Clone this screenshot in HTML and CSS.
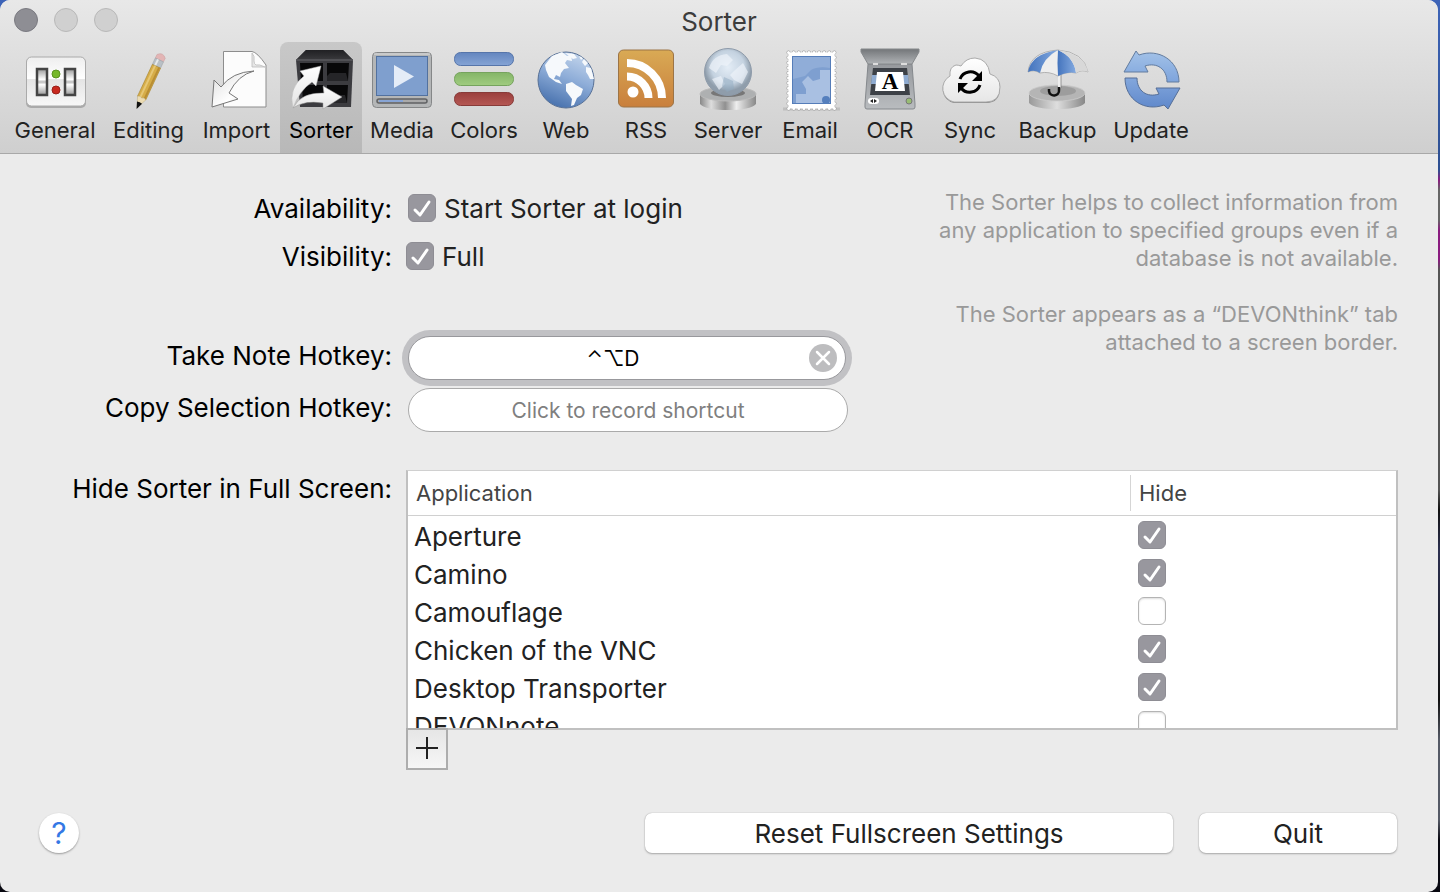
FILE: index.html
```html
<!DOCTYPE html>
<html lang="en">
<head>
<meta charset="UTF-8">
<meta name="viewport" content="width=device-width, initial-scale=1.0">
<title>Sorter</title>
<link rel="stylesheet" href="styles.css">
</head>
<body>
<div class="window">
    <header class="header">
        <div class="titlebar">
            <div class="lights">
                <button class="light light-close" aria-label="Close"></button>
                <button class="light" aria-label="Minimize"></button>
                <button class="light" aria-label="Zoom"></button>
            </div>
            <h1 class="title">Sorter</h1>
        </div>
        <nav class="toolbar">
            <button class="tool">
                <svg class="icon" viewBox="0 0 64 64">
                    <defs>
                        <linearGradient id="panel" x2="0" y2="1"><stop offset="0" stop-color="#eee"/><stop offset=".45" stop-color="#fff"/><stop offset=".46" stop-color="#e4e4e4"/><stop offset="1" stop-color="#f8f8f8"/></linearGradient>
                        <linearGradient id="slot" x2="0" y2="1"><stop offset="0" stop-color="#999"/><stop offset=".4" stop-color="#fff"/><stop offset=".5" stop-color="#bbb"/><stop offset=".6" stop-color="#fff"/><stop offset="1" stop-color="#999"/></linearGradient>
                    </defs>
                    <rect x="3" y="10" width="60" height="50" rx="5" fill="#aaa"/>
                    <rect x="3.500" y="9" width="59" height="49" rx="5" fill="url(#panel)" stroke="#aaa"/>
                    <rect x="14" y="21" width="10" height="26" fill="url(#slot)" stroke="#444" stroke-width="2.500"/>
                    <rect x="42" y="21" width="10" height="26" fill="url(#slot)" stroke="#444" stroke-width="2.500"/>
                    <circle cx="33" cy="26" r="4" fill="#76b82a" stroke="#5b9320"/>
                    <circle cx="33" cy="42" r="4" fill="#c8281e" stroke="#98201a"/>
                </svg>
                <span>General</span>
            </button>
            <button class="tool">
                <svg class="icon" viewBox="0 0 64 64">
                    <g transform="translate(20 60) rotate(25)">
                        <path d="M-4.500-53V-57Q0-62 4.500-57V-53Z" fill="#e3b5b5" stroke="#c9a0a0" stroke-width=".5"/>
                        <path d="M-4.500-53H4.500V-46H-4.500Z" fill="#b9c0c6" stroke="#9aa0a5" stroke-width=".5"/>
                        <path d="M-1.500-53V-46" stroke="#e6eaed" stroke-width="2"/>
                        <path d="M-4.500-46H4.500V-11H-4.500Z" fill="#d6ad48" stroke="#a8852e" stroke-width=".6"/>
                        <path d="M-1.500-46V-11" stroke="#e6c775" stroke-width="2"/>
                        <path d="M3-46V-11" stroke="#b98e33" stroke-width="2"/>
                        <path d="M-4.500-11L0 0L4.500-11Q2-13 0-11Q-2-13-4.500-11Z" fill="#ecdcb4" stroke="#b5a578" stroke-width=".4"/>
                        <path d="M-2.800-6L0 1L2.800-6Q0-7-2.800-6Z" fill="#111"/>
                    </g>
                </svg>
                <span>Editing</span>
            </button>
            <button class="tool">
                <svg class="icon" viewBox="0 0 64 64">
                    <defs><linearGradient id="arrow" x2="1" y2="1"><stop offset="0" stop-color="#ddd"/><stop offset=".6" stop-color="#fff"/><stop offset="1" stop-color="#ccc"/></linearGradient></defs>
                    <path d="M18.500 3.500H47Q52 4 61 17V59H18.500Z" fill="#fcfcfc" stroke="#8d8d8d"/>
                    <path d="M47 5V19H60Q54 16 51 17Q49 16 49 13Q50 8 47 5Z" fill="#e6e6e6" stroke="#bbb" stroke-width=".8"/>
                    <path d="M7 59L9 32L16 39Q27 24 49 23Q33 27 24 45L33 51Z" fill="url(#arrow)" stroke="#777"/>
                </svg>
                <span>Import</span>
            </button>
            <button class="tool tool-active">
                <svg class="icon" viewBox="0 0 64 64">
                    <defs>
                        <linearGradient id="boxtop" x2="0" y2="1"><stop offset="0" stop-color="#202023"/><stop offset="1" stop-color="#3a3a3d"/></linearGradient>
                        <linearGradient id="fly" x2="0" y2="1"><stop offset="0" stop-color="#fff"/><stop offset="1" stop-color="#e4e4e4"/></linearGradient>
                    </defs>
                    <path d="M17 2H54L64 12L62 59H11L7 12Z" fill="#3c3c40"/>
                    <path d="M17 2H54L64 12H7Z" fill="url(#boxtop)"/>
                    <path d="M7 12H64" stroke="#58585c" stroke-width="1.500"/>
                    <path d="M11 15H34V33H12ZM38 15H60L59 33H38ZM13 37H34V55H14ZM38 37H59L58 55H38Z" fill="#080809"/>
                    <path d="M38 33V28L41 25H57L59 33ZM38 55V50L41 47H56L58 55Z" fill="#252528"/>
                    <path d="M4 60Q-1 40 15 28L11 23L32 18L27 38L23 34Q10 43 4 60Z" fill="url(#fly)" stroke="#bbb" stroke-width=".5"/>
                    <path d="M4 60Q12 44 35 45L34 38L53 49L34 61V55Q15 52 4 60Z" fill="url(#fly)" stroke="#999" stroke-width=".5"/>
                </svg>
                <span>Sorter</span>
            </button>
            <button class="tool">
                <svg class="icon" viewBox="0 0 64 64">
                    <rect x="2.500" y="4.500" width="59" height="55" rx="4" fill="#b4b6b7" stroke="#858788"/>
                    <path d="M4 6H60" stroke="#ddd"/>
                    <rect x="6.500" y="8.500" width="51" height="39" fill="#7f9fce" stroke="#52719f"/>
                    <path d="M24 17L44 28.500L24 40Z" fill="#e4ecf7"/>
                    <rect x="7" y="51" width="50" height="4" rx="2" fill="#aaa" stroke="#606264" stroke-width="1.500"/>
                    <path d="M9 53H33" stroke="#88a5d5" stroke-width="2"/>
                </svg>
                <span>Media</span>
            </button>
            <button class="tool">
                <svg class="icon" viewBox="0 0 64 64">
                    <defs>
                        <linearGradient id="blue" x2="0" y2="1"><stop offset="0" stop-color="#6486bf"/><stop offset="1" stop-color="#85a4d5"/></linearGradient>
                        <linearGradient id="green" x2="0" y2="1"><stop offset="0" stop-color="#84b568"/><stop offset="1" stop-color="#a0cc80"/></linearGradient>
                        <linearGradient id="red" x2="0" y2="1"><stop offset="0" stop-color="#9a3f3d"/><stop offset="1" stop-color="#b55854"/></linearGradient>
                    </defs>
                    <rect x="2.500" y="4.500" width="59" height="13" rx="6" fill="url(#blue)" stroke="#5675aa"/>
                    <rect x="2.500" y="24.500" width="59" height="13" rx="6" fill="url(#green)" stroke="#76a35e"/>
                    <rect x="2.500" y="44.500" width="59" height="13" rx="6" fill="url(#red)" stroke="#873b39"/>
                </svg>
                <span>Colors</span>
            </button>
            <button class="tool">
                <svg class="icon" viewBox="0 0 64 64">
                    <defs><linearGradient id="sea" x1=".7" x2=".3" y2="1"><stop offset="0" stop-color="#c3d5ec"/><stop offset=".45" stop-color="#8eadd8"/><stop offset="1" stop-color="#456fac"/></linearGradient></defs>
                    <circle cx="32" cy="32" r="28" fill="url(#sea)" stroke="#587196"/>
                    <path d="M11 17L18 8L28 4L33 8L37 7L38 13L33 12L31 15L35 20L30 21L27 25L26 29L22 27L20 31L25 32L28 36L22 34L15 29L12 22Z" fill="#f6f9fc"/>
                    <path d="M32 36L38 34L42 37L49 41L47 47L43 50L40 57L37 58L38 51L32 43Z" fill="#f6f9fc"/>
                    <path d="M31 5L40 6L43 10L39 11L35 8ZM45 8L49 10L47 12ZM50 11L54 15L51 18L48 14ZM52 19L57 20L60 31L56 31L54 27L52 24Z" fill="#f6f9fc"/>
                </svg>
                <span>Web</span>
            </button>
            <button class="tool">
                <svg class="icon" viewBox="0 0 64 64">
                    <defs><linearGradient id="feed" x2="0" y2="1"><stop offset="0" stop-color="#d9aa55"/><stop offset="1" stop-color="#c97f3c"/></linearGradient></defs>
                    <rect x="4.500" y="2" width="55" height="57" rx="5" fill="url(#feed)" stroke="#9c7446"/>
                    <circle cx="19" cy="44" r="5.500" fill="#fff"/>
                    <path d="M13 28.500A21.500 21.500 0 0 1 34.500 50M13 15A35 35 0 0 1 48 50" fill="none" stroke="#fff" stroke-width="8"/>
                </svg>
                <span>RSS</span>
            </button>
            <button class="tool">
                <svg class="icon" viewBox="0 0 64 64">
                    <defs>
                        <linearGradient id="metal"><stop offset="0" stop-color="#888"/><stop offset=".2" stop-color="#ddd"/><stop offset=".45" stop-color="#909090"/><stop offset=".65" stop-color="#eee"/><stop offset="1" stop-color="#888"/></linearGradient>
                        <radialGradient id="glass" cy=".4"><stop offset="0" stop-color="#e4edf6"/><stop offset=".7" stop-color="#c4d2e0"/><stop offset="1" stop-color="#8f9dab"/></radialGradient>
                    </defs>
                    <path d="M4 46V56Q10 62 32 62T60 56V46Z" fill="url(#metal)"/>
                    <ellipse cx="32" cy="46" rx="28" ry="7" fill="#aeb0b1" stroke="#bbb"/>
                    <ellipse cx="32" cy="45" rx="17" ry="4" fill="#777"/>
                    <circle cx="32" cy="24" r="23.500" fill="url(#glass)" stroke="#8e9baa"/>
                    <path d="M13 20Q17 7 31 6L37 12L31 18L25 17L20 25ZM38 23L47 15L52 24L46 36L38 32L34 27ZM16 31L25 28L29 36L23 42Z" fill="#eff5fa" opacity=".65"/>
                    <path d="M28 29L37 33L38 41L31 44L26 38Z" fill="#90a9bf" opacity=".5"/>
                </svg>
                <span>Server</span>
            </button>
            <button class="tool">
                <svg class="icon" viewBox="0 0 64 64">
                    <path d="M5 61H62" stroke="#aaa" stroke-width="3" opacity=".5"/>
                    <rect x="10.500" y="4.500" width="46" height="56" fill="none" stroke="#999" stroke-width="4" stroke-linecap="round" stroke-dasharray="0 5.100"/>
                    <rect x="10.500" y="4.500" width="46" height="56" fill="#fff"/>
                    <rect x="10.500" y="4.500" width="46" height="56" fill="none" stroke="#fff" stroke-width="3" stroke-linecap="round" stroke-dasharray="0 5.100"/>
                    <rect x="14.500" y="8.500" width="38" height="47" fill="#7e9fd0" stroke="#557db9"/>
                    <path d="M15 9H52V20Q40 18 33 22L27 28L15 31Z" fill="#a2bbdf" opacity=".5"/>
                    <path d="M18 55V46H28V41L24 34L30 28L35 33L42 31V22H52V55Z" fill="#a9c0e2"/>
                    <circle cx="48" cy="52" r="4" fill="#557fbd"/>
                </svg>
                <span>Email</span>
            </button>
            <button class="tool">
                <svg class="icon" viewBox="0 0 64 64">
                    <defs>
                        <linearGradient id="lid" x2="0" y2="1"><stop offset="0" stop-color="#737679"/><stop offset="1" stop-color="#b0b3b6"/></linearGradient>
                        <linearGradient id="scan" x2="0" y2="1"><stop offset="0" stop-color="#96999d"/><stop offset="1" stop-color="#b9bcbf"/></linearGradient>
                    </defs>
                    <path d="M10 16H54L57 56V59Q57 61 55 61H9Q7 61 7 59V56Z" fill="url(#scan)" stroke="#85898d"/>
                    <path d="M3 1H61V4L54 16H10L3 4Z" fill="url(#lid)" stroke="#85888b"/>
                    <path d="M15 15H20V17H15ZM43 15H49V17H43Z" fill="#ddd"/>
                    <path d="M15 20H49L52 47H12Z" fill="#3d4147"/>
                    <path d="M14 27H50L51 36H13Z" fill="#8fabd0"/>
                    <path d="M19 24H45L47 43H17Z" fill="#fff"/>
                    <text class="scan-letter" x="32" y="41">A</text>
                    <rect x="10" y="50" width="11" height="6" rx="3" fill="#fff"/>
                    <path d="M12 53L15 51V55ZM19 53L16 51V55Z" fill="#222"/>
                    <circle cx="51" cy="53" r="3" fill="#98bd74" stroke="#777"/>
                </svg>
                <span>OCR</span>
            </button>
            <button class="tool">
                <svg class="icon" viewBox="0 0 64 64">
                    <defs><linearGradient id="cloud" x2="0" y2="1"><stop offset="0" stop-color="#fff"/><stop offset="1" stop-color="#e6e6e6"/></linearGradient></defs>
                    <path d="M16 54A14 14 0 0 1 12 28Q11 19 18 17Q20 17 23 18Q28 10 37 10Q50 11 52 26Q62 29 62 39Q62 54 48 54Z" fill="#888" transform="translate(0 1)"/>
                    <path d="M16 54A14 14 0 0 1 12 28Q11 19 18 17Q20 17 23 18Q28 10 37 10Q50 11 52 26Q62 29 62 39Q62 54 48 54Z" fill="url(#cloud)" stroke="#aaa"/>
                    <path d="M22 31A11 11 0 0 1 41 28M42 37A11 11 0 0 1 23 40" fill="none" stroke="#000" stroke-width="3"/>
                    <path d="M44 23V33H34ZM20 45V35H30Z"/>
                </svg>
                <span>Sync</span>
            </button>
            <button class="tool">
                <svg class="icon" viewBox="0 0 64 64">
                    <defs>
                        <linearGradient id="disk"><stop offset="0" stop-color="#999"/><stop offset=".5" stop-color="#dedede"/><stop offset="1" stop-color="#888"/></linearGradient>
                        <linearGradient id="cloth"><stop offset="0" stop-color="#4474bd"/><stop offset="1" stop-color="#84aae0"/></linearGradient>
                    </defs>
                    <path d="M3 45V55Q9 61 31 61T59 55V45Z" fill="url(#disk)"/>
                    <ellipse cx="31" cy="45" rx="28" ry="8" fill="#b5b5b5" stroke="#ccc" stroke-width=".8"/>
                    <ellipse cx="32" cy="43" rx="18" ry="5" fill="#8d8d8d" opacity=".6"/>
                    <path d="M33.500 25V40" stroke="#eee" stroke-width="3"/>
                    <path d="M35 25V40" stroke="#777" stroke-width=".7"/>
                    <path d="M33 39V42A5 5 0 0 1 23 43V41" fill="none" stroke="#111" stroke-width="2.500"/>
                    <path d="M2 24Q4 4 32 2Q58 4 62 24Q56 21 50 25Q41 23 32 28Q23 23 14 25Q8 21 2 24Z" fill="#eee" stroke="#999" stroke-width=".7"/>
                    <path d="M2 24Q5 6 32 2Q17 10 14 25Q8 21 2 24Z" fill="url(#cloth)"/>
                    <path d="M32 2Q31 15 32 28Q41 23 50 25Q48 9 32 2Z" fill="url(#cloth)"/>
                    <path d="M32 2Q58 6 62 24Q56 21 50 25Q48 9 32 2Z" fill="#d8d8d8"/>
                </svg>
                <span>Backup</span>
            </button>
            <button class="tool">
                <svg class="icon" viewBox="0 0 64 64">
                    <defs>
                        <linearGradient id="up" x2="0" y2="1"><stop offset="0" stop-color="#a3c2e8"/><stop offset="1" stop-color="#7ea4dc"/></linearGradient>
                        <linearGradient id="down" x2="0" y2="1"><stop offset="0" stop-color="#83a7dc"/><stop offset="1" stop-color="#5f88cb"/></linearGradient>
                    </defs>
                    <path d="M5 24L17 3L20 7C39 0 60 12 60 34H48C48 21 38 14 26 18L29 24Z" fill="url(#up)" stroke="#637c9f"/>
                    <path d="M61 40L49 61L45 57C26 64 6 52 6 30H18C18 43 28 50 40 46L37 40Z" fill="url(#down)" stroke="#566f97"/>
                </svg>
                <span>Update</span>
            </button>
        </nav>
    </header>

    <main class="content">
        <div class="settings">
            <div class="form">
                <div class="row">
                    <span class="label">Availability:</span>
                    <label class="option option-inset"><input type="checkbox" class="check" checked> Start Sorter at login</label>
                </div>
                <div class="row">
                    <span class="label">Visibility:</span>
                    <label class="option"><input type="checkbox" class="check" checked> Full</label>
                </div>
                <div class="row row-hotkey row-first">
                    <label class="label" for="takeNote">Take Note Hotkey:</label>
                    <div class="recorder recorder-focus">
                        <input type="text" id="takeNote" class="recorder-input" value="⌃⌥D" readonly>
                        <button class="clear" aria-label="Clear shortcut">
                            <svg viewBox="0 0 28 28"><circle cx="14" cy="14" r="14" fill="#bdbdbf"/><path d="M8 8L20 20M20 8L8 20" stroke="#fff" stroke-width="2.500" stroke-linecap="round"/></svg>
                        </button>
                    </div>
                </div>
                <div class="row row-hotkey">
                    <label class="label" for="copySelection">Copy Selection Hotkey:</label>
                    <div class="recorder">
                        <input type="text" id="copySelection" class="recorder-input" placeholder="Click to record shortcut" readonly>
                    </div>
                </div>
            </div>
            <div class="help-text">
                <p>The Sorter helps to collect information from any application to specified groups even if a database is not available.</p>
                <p>The Sorter appears as a “DEVONthink” tab attached to a screen border.</p>
            </div>
        </div>

        <div class="row row-table">
            <span class="label">Hide Sorter in Full Screen:</span>
            <div class="list">
                <div class="list-scroll">
                    <table class="apps">
                        <thead>
                            <tr><th>Application</th><th class="hide-col"><span>Hide</span></th></tr>
                        </thead>
                        <tbody>
                            <tr><td>Aperture</td><td class="hide-cell"><input type="checkbox" class="check" aria-label="Hide in Aperture" checked></td></tr>
                            <tr><td>Camino</td><td class="hide-cell"><input type="checkbox" class="check" aria-label="Hide in Camino" checked></td></tr>
                            <tr><td>Camouflage</td><td class="hide-cell"><input type="checkbox" class="check" aria-label="Hide in Camouflage"></td></tr>
                            <tr><td>Chicken of the VNC</td><td class="hide-cell"><input type="checkbox" class="check" aria-label="Hide in Chicken of the VNC" checked></td></tr>
                            <tr><td>Desktop Transporter</td><td class="hide-cell"><input type="checkbox" class="check" aria-label="Hide in Desktop Transporter" checked></td></tr>
                            <tr><td>DEVONnote</td><td class="hide-cell"><input type="checkbox" class="check" aria-label="Hide in DEVONnote"></td></tr>
                        </tbody>
                    </table>
                </div>
                <button class="add" aria-label="Add application">
                    <svg viewBox="0 0 24 24"><path d="M12 1V23M1 12H23" stroke="#222" stroke-width="2"/></svg>
                </button>
            </div>
        </div>
    </main>

    <footer class="footer">
        <button class="help" aria-label="Help">?</button>
        <div class="actions">
            <button class="button button-reset">Reset Fullscreen Settings</button>
            <button class="button">Quit</button>
        </div>
    </footer>
</div>
</body>
</html>
```
FILE: styles.css
```css
* {
    box-sizing: border-box;
}
body {
    margin: 0;
    padding-right: 2px;
    background: linear-gradient(#3d64b8 0, #2d4f91 170px, #8a1c80 180px, #666 190px, #666 220px, #8a1c80 230px, #8a1c80 260px, #555 270px, #555 490px, #111 510px, #2c3050 550px, #111 700px, #555a66 740px, #555a66 820px, #080810 840px);
    color: #222;
    font-family: Inter, Roboto, sans-serif;
    font-size: 26px;
}
button, input {
    font: inherit;
    color: inherit;
}
button {
    padding: 0;
    border: none;
    background: none;
}
.window {
    display: flex;
    flex-direction: column;
    min-height: 100vh;
    background-color: #ebebeb;
    border-radius: 10px;
    overflow: hidden;
}
.header {
    background: linear-gradient(#e8e8e8, #cfcfcf);
    border-bottom: 1px solid #a8a8a8;
}
.titlebar {
    display: grid;
    grid-template-columns: 1fr auto 1fr;
    align-items: center;
    height: 42px;
    padding: 0 14px;
}
.lights {
    display: flex;
    gap: 16px;
    padding-bottom: 2px;
}
.light {
    width: 24px;
    height: 24px;
    border: 1px solid #b8b8b8;
    border-radius: 50%;
    background-color: #d0d0d0;
}
.light-close {
    border-color: #7a7a80;
    background-color: #8e8e94;
}
.title {
    margin: 0;
    font-size: 26px;
    font-weight: 400;
    color: #3c3c3c;
}
.toolbar {
    display: grid;
    grid-template-columns: 98px 89px 87px 82px 80px 84px 80px 80px 84px 80px 80px 80px 95px 92px;
    padding-left: 6px;
}
.tool {
    display: flex;
    flex-direction: column;
    align-items: center;
    gap: 4px;
    height: 111px;
    padding-top: 6px;
    border-radius: 8px 8px 0 0;
    font-size: 22px;
    line-height: 28px;
}
.tool-active {
    background: linear-gradient(#c8c8c8, #b8b8b8);
    color: #000;
}
.icon {
    width: 64px;
    height: 64px;
}
.scan-letter {
    font-family: "Liberation Serif", serif;
    font-size: 23px;
    font-weight: 700;
    text-anchor: middle;
}
.content {
    flex: 1;
    padding: 30px 40px 0 0;
}
.settings {
    display: flex;
    justify-content: space-between;
}
.row {
    display: grid;
    grid-template-columns: 392px 1fr;
    column-gap: 14px;
    align-items: center;
    min-height: 48px;
}
.label {
    text-align: right;
    color: #000;
}
.option {
    display: flex;
    align-items: center;
    gap: 8px;
}
.option-inset {
    padding-left: 2px;
}
.check {
    appearance: none;
    flex: none;
    width: 28px;
    height: 28px;
    margin: 0;
    border: 1px solid #b4b4b4;
    border-radius: 6px;
    background-color: #fff;
    box-shadow: inset 0 1px 2px #ddd;
}
.check:checked {
    border-color: #8e8d94;
    background: #98979e url("data:image/svg+xml,%3Csvg xmlns='http://www.w3.org/2000/svg' viewBox='0 0 26 26'%3E%3Cpath d='M6 15L11 20L20 7' fill='none' stroke='white' stroke-width='3' stroke-linecap='round' stroke-linejoin='round'/%3E%3C/svg%3E") center no-repeat;
    box-shadow: none;
}
.row-hotkey {
    min-height: 52px;
}
.row-hotkey .label {
    padding-bottom: 6px;
}
.row-first {
    margin-top: 52px;
}
.recorder {
    display: flex;
    align-items: center;
    width: 440px;
    height: 44px;
    margin-left: 2px;
    padding: 0 8px;
    border: 1px solid #aaa;
    border-radius: 22px;
    background-color: #fff;
}
.recorder-focus {
    width: 438px;
    border-color: #98989c;
    box-shadow: 0 0 0 6px #c1c1c4;
}
.recorder-input {
    flex: 1;
    min-width: 0;
    padding: 0;
    border: none;
    outline: none;
    background: none;
    color: #000;
    font-size: 21px;
    text-align: center;
}
.recorder-input::placeholder {
    color: #7f7f7f;
}
.clear {
    width: 28px;
    height: 28px;
}
.clear svg {
    display: block;
}
.help-text {
    width: 480px;
    padding-top: 4px;
    color: #999;
    font-size: 22px;
    line-height: 28px;
    text-align: right;
}
.help-text p {
    margin: 0 0 28px;
}
.row-table {
    margin-top: 34px;
    align-items: start;
}
.row-table .label {
    padding-top: 3px;
}
.list-scroll {
    height: 260px;
    border: 2px solid #c0c0c0;
    border-top: 1px solid #d0d0d0;
    background-color: #fff;
    overflow: hidden;
}
.apps {
    width: 100%;
    border-collapse: separate;
    border-spacing: 0;
    table-layout: fixed;
}
.apps th {
    height: 45px;
    padding: 0 8px;
    border-bottom: 1px solid #d0d0d0;
    color: #444;
    font-size: 22px;
    font-weight: 400;
    line-height: 36px;
    text-align: left;
}
.apps .hide-col {
    width: 266px;
    padding: 0;
}
.hide-col span {
    display: block;
    padding-left: 8px;
    border-left: 1px solid #d5d5d5;
}
.apps td {
    height: 38px;
    padding: 4px 6px 0;
    line-height: 30px;
}
.apps .hide-cell {
    padding: 0 8px;
}
.hide-cell .check {
    display: block;
}
.add {
    display: flex;
    align-items: center;
    justify-content: center;
    width: 42px;
    height: 42px;
    margin-top: -2px;
    padding-bottom: 2px;
    border: 2px solid #adadad;
    background: linear-gradient(#e6e6e6, #f6f6f6);
}
.add svg {
    width: 24px;
    height: 24px;
}
.footer {
    display: flex;
    align-items: center;
    justify-content: space-between;
    padding: 0 41px 39px 39px;
}
.help {
    width: 40px;
    height: 40px;
    border-radius: 50%;
    background-color: #fff;
    box-shadow: 0 1px 2px #999;
    color: #3478e5;
    font-size: 30px;
    line-height: 40px;
}
.actions {
    display: flex;
    gap: 26px;
}
.button {
    width: 198px;
    height: 40px;
    border-radius: 7px;
    background-color: #fff;
    box-shadow: 0 0 1px #999, 0 1px 2px #aaa;
}
.button-reset {
    width: 528px;
}
```
